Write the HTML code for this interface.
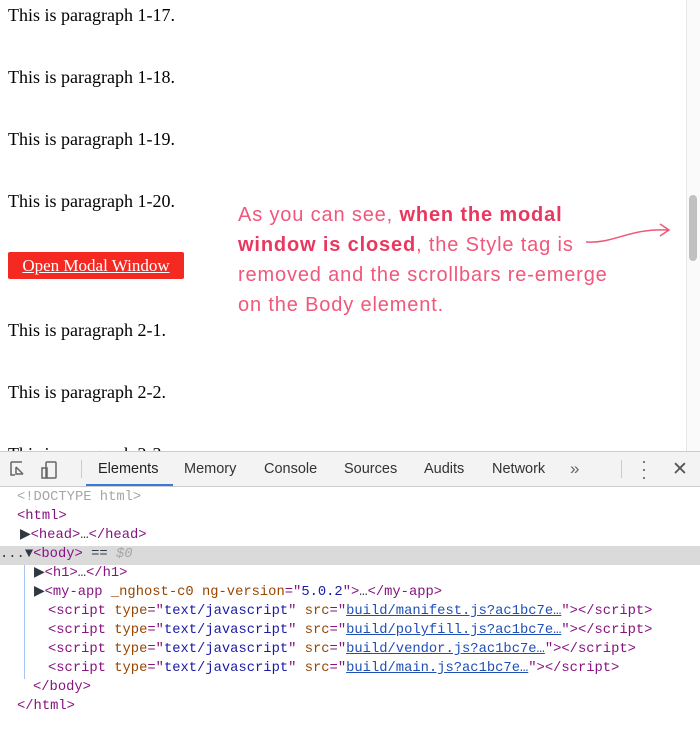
<!DOCTYPE html>
<html><head><style>
body{margin:0;width:700px;height:728px;overflow:hidden;background:#fff;position:relative;font-family:"Liberation Serif",serif}
.p{position:absolute;left:8px;font-size:18px;line-height:20px;color:#000}
.btn{position:absolute;left:8px;top:252px;width:176px;height:27px;background:#f42a22;border-radius:2px;color:#fff;font-size:17px;text-align:center;line-height:27px;text-decoration:underline}
.sb{position:absolute;left:686px;top:0;width:14px;height:451px;background:#fafafa;border-left:1px solid #e6e6e6}
.thumb{position:absolute;left:689px;top:195px;width:8px;height:66px;background:#c1c1c1;border-radius:4px}
.note{position:absolute;left:238px;top:200px;font-family:"Liberation Sans",sans-serif;font-size:20px;line-height:30px;color:#f0577a;white-space:nowrap;letter-spacing:0.85px}
.note b{color:#e8385f}
.dt{position:absolute;left:0;top:451px;width:700px;height:277px;background:#fff;border-top:1px solid #ccc}
.bar{height:34px;background:#f3f3f3;border-bottom:1px solid #ccc;position:relative;font-family:"Liberation Sans",sans-serif;font-size:14.5px;color:#333}
.tab{position:absolute;top:9px}
.tree{font-family:"Liberation Mono",monospace;font-size:13.8px;color:#881280;position:absolute;left:0;top:36px;width:700px}
.l{position:absolute;height:19px;line-height:19px;white-space:pre}
.g{color:#a6a6a6}.a{color:#994500}.v{color:#1a1aa6}.u{text-decoration:underline;color:#1f4fb5}
.k{color:#303942}
</style></head><body>
<div class="p" style="top:5px">This is paragraph 1-17.</div>
<div class="p" style="top:67px">This is paragraph 1-18.</div>
<div class="p" style="top:129px">This is paragraph 1-19.</div>
<div class="p" style="top:191px">This is paragraph 1-20.</div>
<div class="btn">Open Modal Window</div>
<div class="p" style="top:320px">This is paragraph 2-1.</div>
<div class="p" style="top:382px">This is paragraph 2-2.</div>
<div class="p" style="top:444px">This is paragraph 2-3.</div>
<div class="sb"></div><div class="thumb"></div>
<div class="note">As you can see, <b>when the modal</b><br><b>window is closed</b>, the Style tag is<br>removed and the scrollbars re-emerge<br>on the Body element.</div>
<svg style="position:absolute;left:584px;top:220px" width="90" height="30"><path d="M2 22 C30 24 45 8 84 10 M76 4 L85 10 L76 16" fill="none" stroke="#f0577a" stroke-width="1.5"/></svg>
<div class="dt">
<div class="bar">
<svg style="position:absolute;left:10px;top:9px" width="60" height="18"><path d="M1 1h11M1 1v13h4M6 6l7 7M6 6v7h7" fill="none" stroke="#666" stroke-width="1.5"/><rect x="36" y="1" width="10" height="16" rx="1" fill="none" stroke="#666" stroke-width="1.5"/><rect x="32" y="7" width="5" height="10" fill="none" stroke="#666" stroke-width="1.5"/></svg>
<div style="position:absolute;left:81px;top:8px;width:1px;height:18px;background:#ccc"></div>
<span class="tab" style="left:98px;color:#222">Elements</span>
<div style="position:absolute;left:86px;top:32px;width:87px;height:2px;background:#3879d9"></div>
<span class="tab" style="left:184px">Memory</span>
<span class="tab" style="left:264px">Console</span>
<span class="tab" style="left:344px">Sources</span>
<span class="tab" style="left:424px">Audits</span>
<span class="tab" style="left:492px">Network</span>
<span class="tab" style="left:570px;top:7px;font-size:17px;color:#666">»</span>
<div style="position:absolute;left:621px;top:8px;width:1px;height:18px;background:#ccc"></div>
<span class="tab" style="left:641px;top:5px;font-size:18px;color:#666;line-height:8px">·<br>·<br>·</span>
<span class="tab" style="left:672px;top:6px;font-size:19px;color:#555">✕</span>
</div>
<div class="tree">
<div style="position:absolute;left:0;top:58px;width:700px;height:19px;background:#dadada"></div>
<div style="position:absolute;left:24px;top:77px;width:1px;height:114px;background:#a8c4f0"></div>
<div class="l g" style="left:17px;top:0">&lt;!DOCTYPE html&gt;</div>
<div class="l" style="left:17px;top:19px">&lt;html&gt;</div>
<div class="l" style="left:20px;top:38px"><span class="k">▶</span>&lt;head&gt;<span class="k">…</span>&lt;/head&gt;</div>
<div class="l" style="left:0;top:57px"><span class="k">...▼</span>&lt;body&gt; <span class="k">==</span> <span class="g" style="font-style:italic">$0</span></div>
<div class="l" style="left:34px;top:76px"><span class="k">▶</span>&lt;h1&gt;<span class="k">…</span>&lt;/h1&gt;</div>
<div class="l" style="left:34px;top:95px"><span class="k">▶</span>&lt;my-app <span class="a">_nghost-c0 ng-version</span>="<span class="v">5.0.2</span>"&gt;<span class="k">…</span>&lt;/my-app&gt;</div>
<div class="l" style="left:48px;top:114px">&lt;script <span class="a">type</span>="<span class="v">text/javascript</span>" <span class="a">src</span>="<span class="u">build/manifest.js?ac1bc7e…</span>"&gt;&lt;/script&gt;</div>
<div class="l" style="left:48px;top:133px">&lt;script <span class="a">type</span>="<span class="v">text/javascript</span>" <span class="a">src</span>="<span class="u">build/polyfill.js?ac1bc7e…</span>"&gt;&lt;/script&gt;</div>
<div class="l" style="left:48px;top:152px">&lt;script <span class="a">type</span>="<span class="v">text/javascript</span>" <span class="a">src</span>="<span class="u">build/vendor.js?ac1bc7e…</span>"&gt;&lt;/script&gt;</div>
<div class="l" style="left:48px;top:171px">&lt;script <span class="a">type</span>="<span class="v">text/javascript</span>" <span class="a">src</span>="<span class="u">build/main.js?ac1bc7e…</span>"&gt;&lt;/script&gt;</div>
<div class="l" style="left:33px;top:190px">&lt;/body&gt;</div>
<div class="l" style="left:17px;top:209px">&lt;/html&gt;</div>
</div>
</div>
</body></html>
